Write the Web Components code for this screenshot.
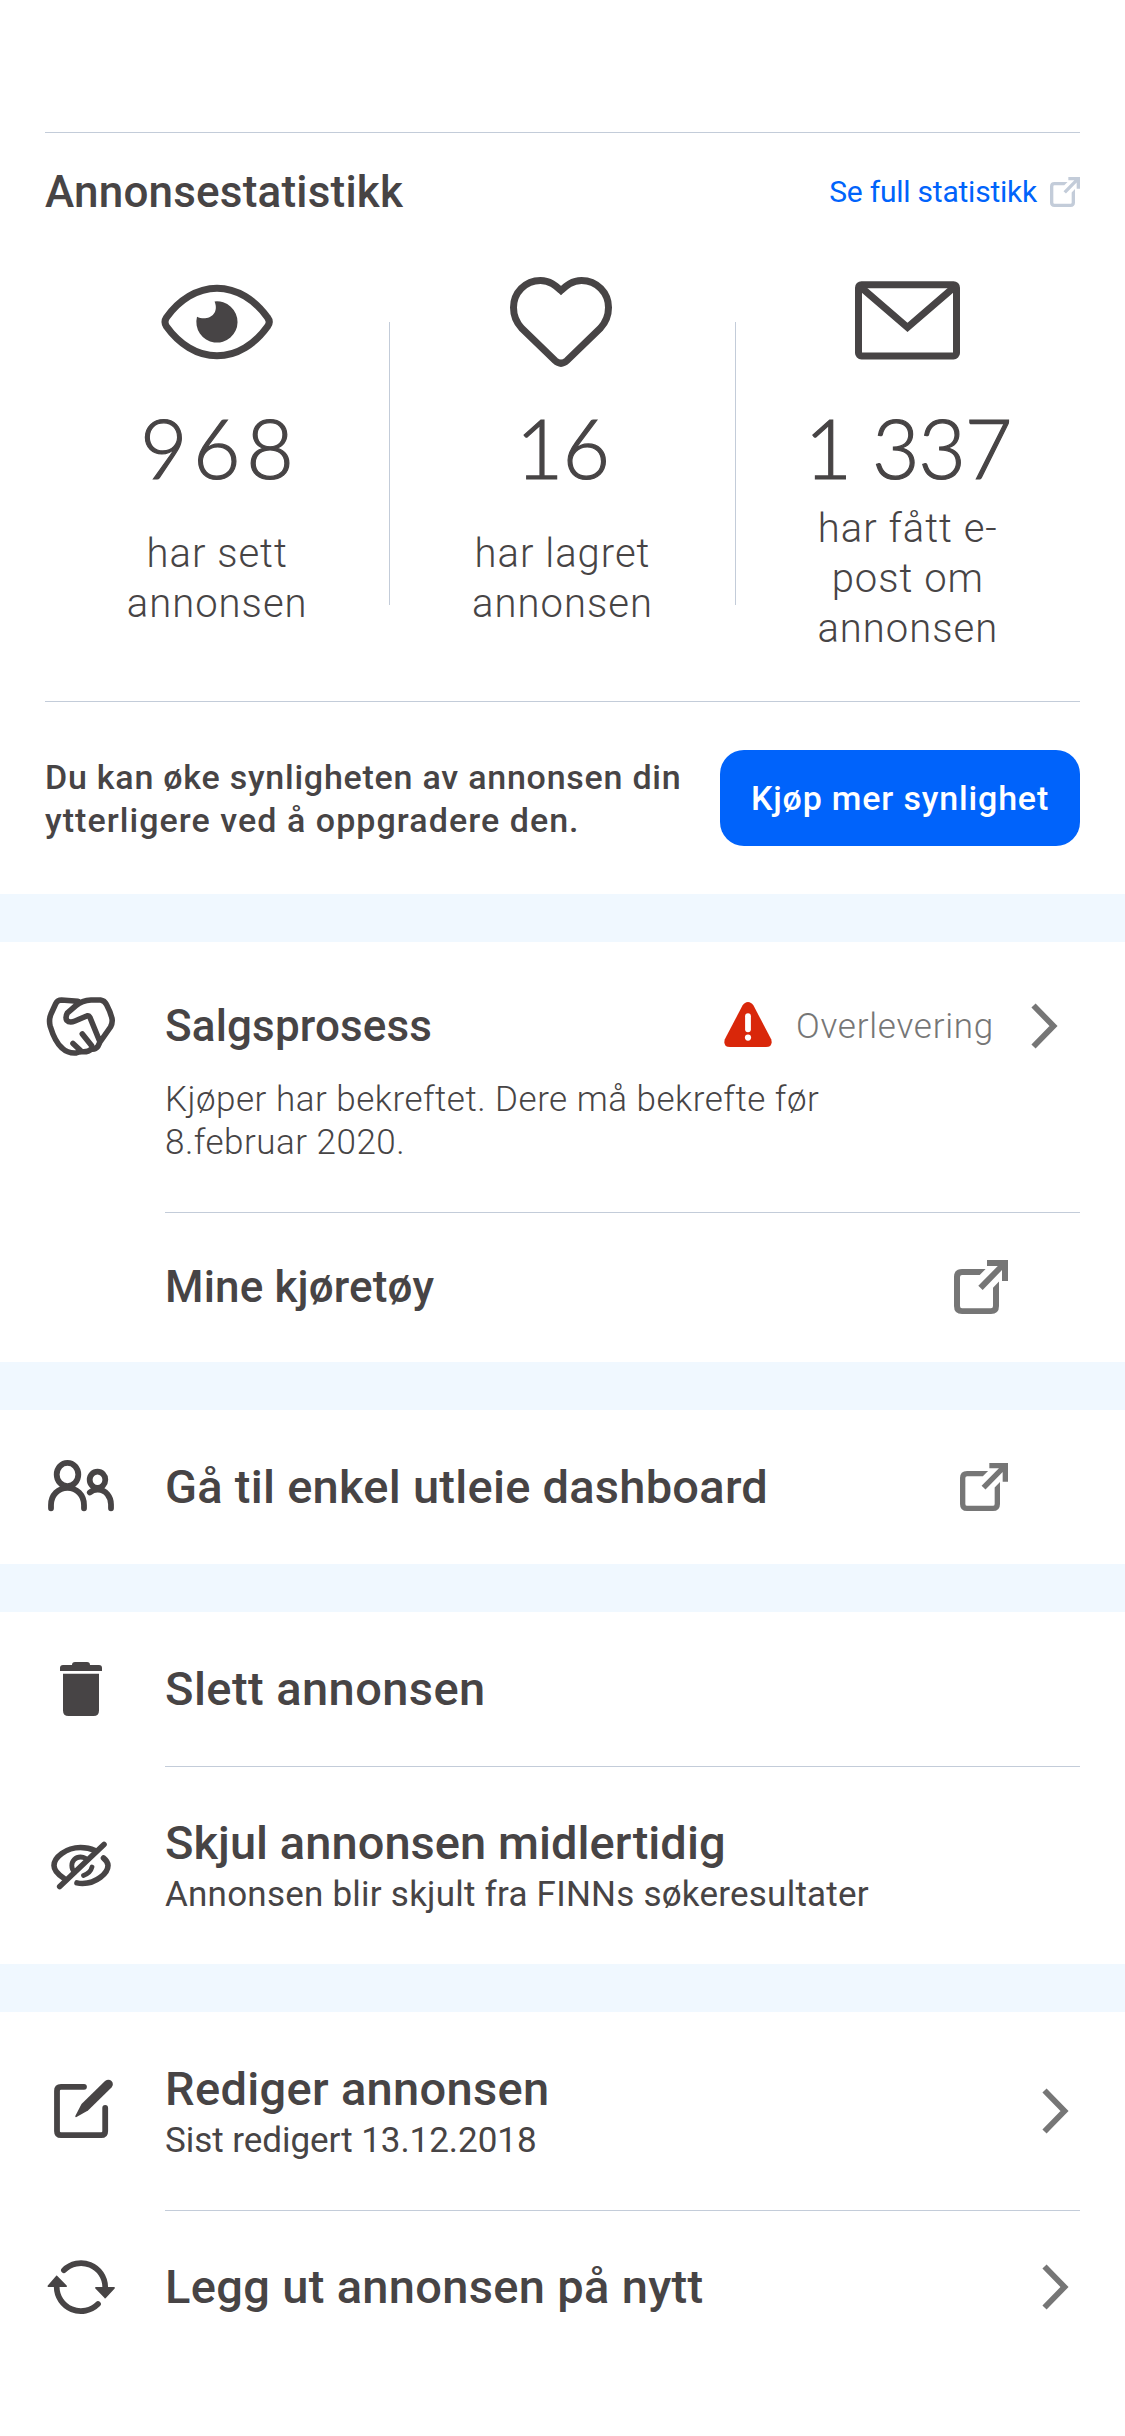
<!DOCTYPE html>
<html lang="nb">
<head>
<meta charset="utf-8">
<title>Annonsestatistikk</title>
<style>
  html, body { margin: 0; background: #fff; }
  body { font-family: Roboto, "Noto Sans", sans-serif; color: #474445; width: 1125px; }
</style>
</head>
<body>
<ad-dashboard></ad-dashboard>

<script>
const define = (name, html, setup) => {
  const template = document.createElement('template');
  template.innerHTML = html;
  customElements.define(name, class extends HTMLElement {
    connectedCallback() {
      if (this.shadowRoot) return;
      const root = this.attachShadow({ mode: 'open' });
      root.append(template.content.cloneNode(true));
      if (setup) setup(this, root);
    }
  });
};

const icons = {
  eye: ['0 0 112 112', '<path d="M5.5 51.5C18 34 36 22.2 56 22.2S94 34 106.500 51.500Q110 56 106.500 60.500C94 78 76 89.800 56 89.800S18 78 5.500 60.500Q2.500 56 5.500 51.500Z" fill="none" stroke="currentColor" stroke-width="7"/><path d="M53.600 35.500A20.600 20.600 0 1 1 36 50.800C46 55.500 59 49 53.600 35.500Z" fill="currentColor"/>'],
  heart: ['0 0 112 112', '<path d="M55 24.5C50 20 44 14.5 34.5 14.5C19 14.5 7.5 27 7.5 41.5C7.5 50 10.5 56.5 15.5 62L49 94.5Q55 100 61 94.5L94.5 62C99.5 56.5 102.5 50 102.5 41.5C102.5 27 91 14.5 75.5 14.5C66 14.5 60 20 55 24.5Z" fill="none" stroke="currentColor" stroke-width="7"/>'],
  mail: ['0 0 112 112', '<g fill="none" stroke="currentColor" stroke-width="7"><rect x="6.5" y="18.7" width="98" height="71.3" rx="3"/><path d="M7.5 20L55.5 61.3L103.5 20"/></g>'],
  hands: ['0 0 72 72', '<g fill="none" stroke="currentColor" stroke-width="5.6" stroke-linecap="round" stroke-linejoin="round"><path d="M33 11.3L16.5 10Q12.5 10 10.8 13.5L6 24Q3.5 30 5.3 36.5Q10 52 17 58Q23 63.6 31 63Q34.500 61.500 38 61.800Q43.500 62 46.500 59Q50.500 59.500 52.800 56.500L55 52L65.500 37Q67.800 33 67 28.500Q65.500 22 61.500 14.500Q59.500 10.500 55.500 10L46 10Q37 10.500 31 15.500L22.500 22.800Q20 27 21.800 30.300Q24.500 33.300 30 31L42.300 25.700Q44 25.500 45 27.500L55 52"/><path d="M37.300 44L46.500 55.500M28 53.500L36 61"/></g>'],
  people: ['0 0 72 72', '<g fill="none" stroke="currentColor" stroke-width="5.8" stroke-linecap="round"><ellipse cx="22.500" cy="23.500" rx="10.800" ry="11.700"/><path d="M6 57.300V54C6 44 13.500 36.800 22.500 36.800S39 44 39 54V57.300"/><ellipse cx="52.500" cy="28.800" rx="7.800" ry="8.200"/><path d="M44.800 41.500Q48.500 38.500 53 38.700C61 39 66 46 66 53.500V57.300"/></g>'],
  trash: ['0 0 72 72', '<path fill="currentColor" d="M15 18V15Q15 12 18 12H27Q27 9 30 9H42Q45 9 45 12H54Q57 12 57 15V18ZM18 20.700H54V57.500Q54 63 48.500 63H23.500Q18 63 18 57.500Z"/>'],
  hidden: ['0 0 72 72', '<g fill="none" stroke="currentColor" stroke-width="5.600" stroke-linecap="round"><path d="M59 14.500L14.700 56.500"/><path d="M18.500 48C12.500 44 9 39.500 9 35.500C9 27.500 21 17.500 35.500 17.500C41 17.500 46 18.700 50 20.500"/><path d="M58.500 28C61.500 30.500 63 33 63 35.500C63 43 51.500 53.500 37.500 53.500Q34.500 53.500 32 52.900"/><path d="M29.500 42.500C27.200 40 26.800 38 26.800 35.500C26.800 31 30.500 27 35.500 27Q38.300 27 40.500 28.300" stroke-width="4.800"/><path d="M47 37Q45.500 43 38.500 45.500" stroke-width="4.800"/></g>'],
  edit: ['0 0 72 72', '<path d="M39 11.800H16Q12 11.800 12 15.800V56.200Q12 60.200 16 60.200H56.200Q60.200 60.200 60.200 56.200V33" fill="none" stroke="currentColor" stroke-width="5.800" stroke-linecap="round"/><path d="M60 6Q63.500 3.300 66.500 6Q69.300 9 66.500 12.500L43 35.500L31.500 42Q30 42.500 30.300 41L36.500 29Z" fill="currentColor"/>'],
  refresh: ['0 0 72 72', '<path d="M18.900 19.200A24.200 24.200 0 0 1 60.200 36V38M53 53A24.200 24.200 0 0 1 11.700 36V34" fill="none" stroke="currentColor" stroke-width="5.700" stroke-linecap="round"/><path d="M11.700 25.500L3.500 35.200H21Z M60.200 46.500L51 36.800H69Z" fill="currentColor" stroke="currentColor" stroke-width="1.800" stroke-linejoin="round"/>'],
  external: ['0 0 54 54', '<path fill="currentColor" d="M31.600 9H8Q0 9 0 17V46Q0 54 8 54H37Q45 54 45 46V21.500L39 27.700V46Q39 48.200 37 48.200H8Q6 48.200 6 46V17Q6 15 8 15H25.700ZM33 0H54V21H48V10L28.700 29.900L24.300 25.700L43.800 6H33Z"/>'],
  chevron: ['0 0 26 46', '<path d="M2.500 2.500L22.500 23L2.500 43.500" fill="none" stroke="currentColor" stroke-width="5.800"/>'],
  alert: ['0 0 48 45', '<path fill="currentColor" d="M18.500 3.500Q20.800 0 24 0T29.500 3.500L47.300 37.500Q49 45 42 45H6Q-1 45 .7 37.500Z"/><path d="M24 14.200V27.300" stroke="#fff" stroke-width="5.800" stroke-linecap="round"/><circle cx="24" cy="35.600" r="3.100" fill="#fff"/>']
};

const makeIcon = name => {
  const icon = document.createElement('ad-icon');
  icon.setAttribute('name', name);
  return icon;
};

define('ad-icon', '<style>:host{display:block;flex:none}svg{display:block;width:100%;height:100%;overflow:visible}</style>', (el, root) => {
  const [box, shapes] = icons[el.getAttribute('name')];
  root.innerHTML += `<svg viewBox="${box}" aria-hidden="true">${shapes}</svg>`;
});

define('ad-stat', `
<style>
  :host { display: flex; flex-direction: column; align-items: center; flex: 1; padding-top: 15px; }
  .icon ad-icon { width: 112px; height: 112px; }
  .number { margin: 20px 0 6px; font-family: Lato, sans-serif; font-size: 82px; font-weight: 300; line-height: 99px; white-space: pre; -webkit-text-stroke: 1.2px currentColor; }
  .label { height: 150px; margin-top: 1px; display: flex; align-items: center; text-align: center; font-size: 40px; font-weight: 300; line-height: 50px; letter-spacing: 1px; }
</style>
<div class="icon"></div>
<div class="number"><slot name="number"></slot></div>
<div class="label"><slot></slot></div>`, (el, root) => {
  root.querySelector('.icon').append(makeIcon(el.getAttribute('icon')));
});

define('ad-section', `
<style>
  :host { display: block; border-top: 48px solid #f0f8ff; }
</style>
<slot></slot>`);

define('ad-divider', '<style>:host{display:block;height:1px;margin:0 45px 0 165px;background:#c3ccd9}</style>');

define('ad-row', `
<style>
  :host { display: flex; align-items: center; box-sizing: border-box; padding: 0 45px; }
  .icon { width: 72px; height: 72px; flex: none; margin-right: 48px; }
  .icon ad-icon { width: 72px; height: 72px; }
  .text { flex: 1; min-width: 0; white-space: nowrap; }
  .title { font-size: 47px; font-weight: 500; line-height: 52px; letter-spacing: var(--title-tracking, .28px); }
  :host([compact]) .title { font-size: 44px; }
  .sub ::slotted(*) { display: block; font-size: 35px; line-height: 50px; padding-top: 1px; }
  .end { display: flex; align-items: center; flex: none; color: #767676; }
</style>
<div class="icon"></div>
<div class="text"><div class="title"><slot></slot></div><div class="sub"><slot name="sub"></slot></div></div>
<div class="end"><slot name="end"></slot></div>`, (el, root) => {
  if (el.hasAttribute('icon')) root.querySelector('.icon').append(makeIcon(el.getAttribute('icon')));
});

define('ad-dashboard', `
<style>
  :host { display: block; background: #fff; }
  .overview { padding: 132px 45px 0; }
  .rule { height: 1px; background: #c3ccd9; }
  header { display: flex; align-items: center; height: 118px; }
  h1 { margin: 0; flex: 1; font-size: 44px; font-weight: 500; letter-spacing: .2px; }
  .link { color: #0063fb; font-size: 30px; letter-spacing: -.23px; margin: -2px 13px 0 0; }
  .link + ad-icon { width: 30px; height: 30px; color: #c3ccd9; }
  .stats { display: flex; height: 450px; }
  .bar { width: 1px; height: 283px; margin-top: 71px; background: #c3ccd9; flex: none; }
  .promo { display: flex; align-items: center; justify-content: space-between; height: 192px; }
  .promo p { margin: 2px 0 0; font-size: 34px; font-weight: 500; line-height: 43px; letter-spacing: .76px; white-space: nowrap; }
  .promo p span { letter-spacing: 1.05px; }
  button { all: unset; box-sizing: border-box; width: 360px; height: 96px; border-radius: 24px; background: #0063fb; color: #fff; font-size: 34px; font-weight: 500; letter-spacing: .83px; text-align: center; }
  .process { height: 270px; box-sizing: border-box; padding: 60px 0 0; }
  .process ad-row { height: 47px; --title-tracking: .15px; }
  .status { font-size: 35px; font-weight: 300; letter-spacing: .75px; margin: 2px 37px 0 24px; }
  .note { margin: 29px 0 0 165px; font-size: 35px; font-weight: 300; line-height: 43px; letter-spacing: .5px; }
  .chevron { width: 26px; height: 46px; margin-right: 12px; }
  .process .chevron { margin-right: 23px; }
  .alert { width: 48px; height: 45px; margin-top: -2px; color: #d9270a; }
  .ext { width: 48px; height: 48px; margin-right: 72px; }
  .ext.large { width: 54px; height: 54px; }
  .vehicles { height: 149px; padding-bottom: 1px; --title-tracking: .15px; }
  .single { height: 154px; }
</style>
<section class="overview">
  <div class="rule"></div>
  <header><h1>Annonsestatistikk</h1><span class="link">Se full statistikk</span><ad-icon name="external"></ad-icon></header>
  <div class="stats">
    <ad-stat icon="eye"><span slot="number" style="letter-spacing:5.500px;margin-right:-5px">968</span><span>har sett<br>annonsen</span></ad-stat>
    <div class="bar"></div>
    <ad-stat icon="heart"><span slot="number" style="letter-spacing:-.8px">16</span><span>har lagret<br>annonsen</span></ad-stat>
    <div class="bar"></div>
    <ad-stat icon="mail"><span slot="number" style="letter-spacing:-1.200px">1 337</span><span>har fått e-<br>post om<br>annonsen</span></ad-stat>
  </div>
  <div class="rule"></div>
  <div class="promo"><p>Du kan øke synligheten av annonsen din<br><span>ytterligere ved å oppgradere den.</span></p><button>Kjøp mer synlighet</button></div>
</section>
<ad-section>
  <div class="process">
    <ad-row icon="hands" compact>Salgsprosess
      <ad-icon slot="end" class="alert" name="alert"></ad-icon><span slot="end" class="status">Overlevering</span><ad-icon slot="end" class="chevron" name="chevron"></ad-icon>
    </ad-row>
    <div class="note">Kjøper har bekreftet. Dere må bekrefte før<br>8.februar 2020.</div>
  </div>
  <ad-divider></ad-divider>
  <ad-row compact class="vehicles">Mine kjøretøy<ad-icon slot="end" class="ext large" name="external"></ad-icon></ad-row>
</ad-section>
<ad-section>
  <ad-row class="single" icon="people" style="--title-tracking:.26px">Gå til enkel utleie dashboard<ad-icon slot="end" class="ext" name="external"></ad-icon></ad-row>
</ad-section>
<ad-section>
  <ad-row class="single" icon="trash" style="--title-tracking:.43px">Slett annonsen</ad-row>
  <ad-divider></ad-divider>
  <ad-row icon="hidden" style="height:197px;--title-tracking:.05px">Skjul annonsen midlertidig<span slot="sub" style="letter-spacing:.23px;margin-bottom:-6px">Annonsen blir skjult fra FINNs søkeresultater</span></ad-row>
</ad-section>
<ad-section>
  <ad-row icon="edit" style="height:198px;--title-tracking:.32px">Rediger annonsen<span slot="sub" style="letter-spacing:-.05px;margin-bottom:-6px">Sist redigert 13.12.2018</span><ad-icon slot="end" class="chevron" name="chevron"></ad-icon></ad-row>
  <ad-divider></ad-divider>
  <ad-row icon="refresh" style="height:152px;--title-tracking:.33px">Legg ut annonsen på nytt<ad-icon slot="end" class="chevron" name="chevron"></ad-icon></ad-row>
</ad-section>`);
</script>
</body>
</html>
